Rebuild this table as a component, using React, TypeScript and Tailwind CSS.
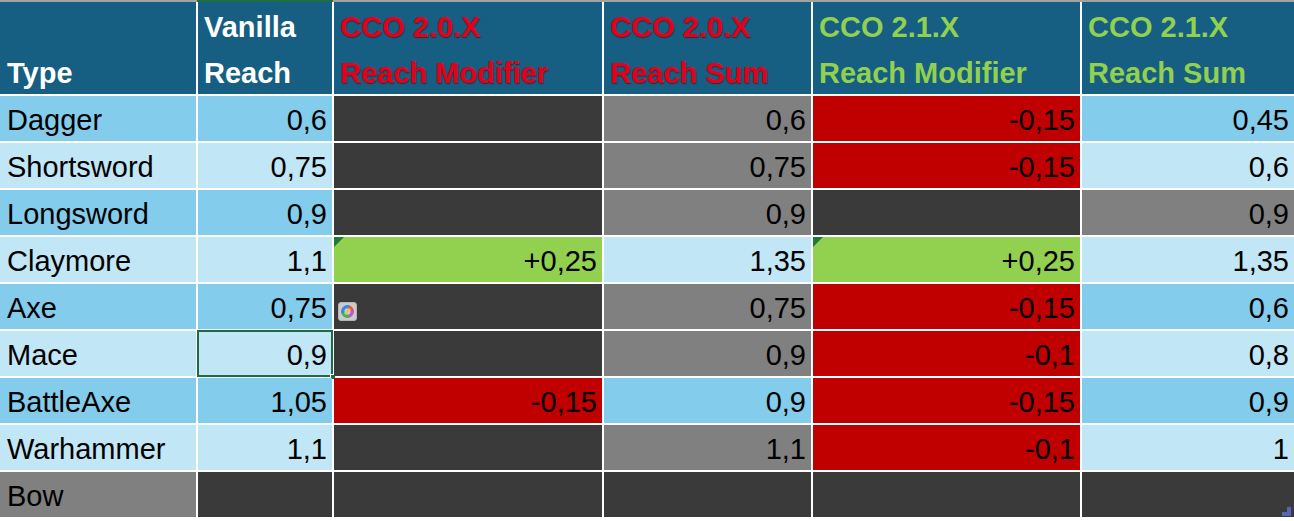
import React from 'react';

type Fill = 'blue' | 'light' | 'dark' | 'gray' | 'red' | 'green';

const fillClass: Record<Fill, string> = {
  blue: 'bg-[#83cceb]',
  light: 'bg-[#c1e6f5]',
  dark: 'bg-[#3a3a3a]',
  gray: 'bg-[#808080]',
  red: 'bg-[#c00000]',
  green: 'bg-[#92d050]',
};

type Cell = { v?: string; f: Fill; flag?: boolean };

type Row = { name: string; nameFill: Fill; cells: Cell[] };

const rows: Row[] = [
  { name: 'Dagger', nameFill: 'blue', cells: [{ v: '0,6', f: 'blue' }, { f: 'dark' }, { v: '0,6', f: 'gray' }, { v: '-0,15', f: 'red' }, { v: '0,45', f: 'blue' }] },
  { name: 'Shortsword', nameFill: 'light', cells: [{ v: '0,75', f: 'light' }, { f: 'dark' }, { v: '0,75', f: 'gray' }, { v: '-0,15', f: 'red' }, { v: '0,6', f: 'light' }] },
  { name: 'Longsword', nameFill: 'blue', cells: [{ v: '0,9', f: 'blue' }, { f: 'dark' }, { v: '0,9', f: 'gray' }, { f: 'dark' }, { v: '0,9', f: 'gray' }] },
  { name: 'Claymore', nameFill: 'light', cells: [{ v: '1,1', f: 'light' }, { v: '+0,25', f: 'green', flag: true }, { v: '1,35', f: 'light' }, { v: '+0,25', f: 'green', flag: true }, { v: '1,35', f: 'light' }] },
  { name: 'Axe', nameFill: 'blue', cells: [{ v: '0,75', f: 'blue' }, { f: 'dark' }, { v: '0,75', f: 'gray' }, { v: '-0,15', f: 'red' }, { v: '0,6', f: 'blue' }] },
  { name: 'Mace', nameFill: 'light', cells: [{ v: '0,9', f: 'light' }, { f: 'dark' }, { v: '0,9', f: 'gray' }, { v: '-0,1', f: 'red' }, { v: '0,8', f: 'light' }] },
  { name: 'BattleAxe', nameFill: 'blue', cells: [{ v: '1,05', f: 'blue' }, { v: '-0,15', f: 'red' }, { v: '0,9', f: 'blue' }, { v: '-0,15', f: 'red' }, { v: '0,9', f: 'blue' }] },
  { name: 'Warhammer', nameFill: 'light', cells: [{ v: '1,1', f: 'light' }, { f: 'dark' }, { v: '1,1', f: 'gray' }, { v: '-0,1', f: 'red' }, { v: '1', f: 'light' }] },
  { name: 'Bow', nameFill: 'gray', cells: [{ f: 'dark' }, { f: 'dark' }, { f: 'dark' }, { f: 'dark' }, { f: 'dark' }] },
];

const headers = [
  { l1: '', l2: 'Type', tone: 'text-white' },
  { l1: 'Vanilla', l2: 'Reach', tone: 'text-white' },
  { l1: 'CCO 2.0.X', l2: 'Reach Modifier', tone: 'text-[#e3001b] [text-shadow:1px_1px_1px_rgba(60,0,0,0.55)]' },
  { l1: 'CCO 2.0.X', l2: 'Reach Sum', tone: 'text-[#e3001b] [text-shadow:1px_1px_1px_rgba(60,0,0,0.55)]' },
  { l1: 'CCO 2.1.X', l2: 'Reach Modifier', tone: 'text-[#92d050]' },
  { l1: 'CCO 2.1.X', l2: 'Reach Sum', tone: 'text-[#92d050]' },
];

function CopilotBadge() {
  return (
    <div className="absolute left-[4px] top-[18px] w-[19px] h-[19px] rounded-[3px] bg-[#cbcbcb] border border-[#b4b4b4] flex items-center justify-center">
      <svg width="13" height="13" viewBox="0 0 12 12">
        <path d="M6 1.6 A4.4 4.4 0 0 1 10.4 6" stroke="#f0523a" strokeWidth="3" fill="none" strokeLinecap="round" />
        <path d="M10.4 6 A4.4 4.4 0 0 1 6 10.4" stroke="#b45bd6" strokeWidth="3" fill="none" strokeLinecap="round" />
        <path d="M6 10.4 A4.4 4.4 0 0 1 1.6 6" stroke="#3fb35a" strokeWidth="3" fill="none" strokeLinecap="round" />
        <path d="M1.6 6 A4.4 4.4 0 0 1 6 1.6" stroke="#2f8be6" strokeWidth="3" fill="none" strokeLinecap="round" />
        <path d="M4.2 7.8 L7.8 4.2" stroke="#f7c23a" strokeWidth="2" strokeLinecap="round" />
      </svg>
    </div>
  );
}

export default function App() {
  return (
    <div className="w-[1294px] h-[521px] bg-white overflow-hidden font-['Liberation_Sans',Arial,sans-serif] text-[29px] text-black">
      {/* top edge with column selection marker */}
      <div className="flex h-[2px]">
        <div className="w-[197px] bg-[#a3a3a3]" />
        <div className="w-[136px] bg-[#1e6e43]" />
        <div className="flex-1 bg-[#a3a3a3]" />
      </div>

      <div className="grid grid-cols-[196px_134px_268px_207px_267px_212px] gap-[2px] bg-white">
        {headers.map((h, i) => (
          <div key={i} className={`h-[92px] bg-[#165f82] pt-[2px] ${i === 0 ? 'pl-[7px]' : 'pl-[6px]'} font-bold leading-[46px] ${h.tone}`}>
            <div className="h-[46px] whitespace-nowrap">{h.l1}</div>
            <div className="h-[46px] whitespace-nowrap">{h.l2}</div>
          </div>
        ))}

        {rows.map((r) => (
          <React.Fragment key={r.name}>
            <div className={`h-[45px] leading-[45px] pt-[2px] pl-[7px] ${fillClass[r.nameFill]}`}>{r.name}</div>
            {r.cells.map((c, j) => (
              <div key={j} className={`relative h-[45px] leading-[45px] pt-[2px] pr-[5px] text-right ${fillClass[c.f]}`}>
                {c.v}
                {c.flag && (
                  <div className="absolute left-0 top-0 w-0 h-0 border-t-[10px] border-r-[10px] border-t-[#1f7a37] border-r-transparent" />
                )}
                {r.name === 'Axe' && j === 1 && <CopilotBadge />}
                {r.name === 'Mace' && j === 0 && (
                  <>
                    <div className="absolute -left-[1px] -top-[1px] -right-[1px] -bottom-[1px] border-2 border-[#1e6b45]" />
                    <div className="absolute -right-[4px] -bottom-[4px] w-[6px] h-[6px] bg-[#1e6b45] border border-white" />
                  </>
                )}
                {r.name === 'Bow' && j === 4 && (
                  <svg className="absolute right-[3px] bottom-[1px]" width="9" height="9" viewBox="0 0 9 9">
                    <rect x="5" y="0" width="4" height="9" fill="#5566b8" />
                    <rect x="0" y="5" width="9" height="4" fill="#5566b8" />
                  </svg>
                )}
              </div>
            ))}
          </React.Fragment>
        ))}
      </div>
    </div>
  );
}
